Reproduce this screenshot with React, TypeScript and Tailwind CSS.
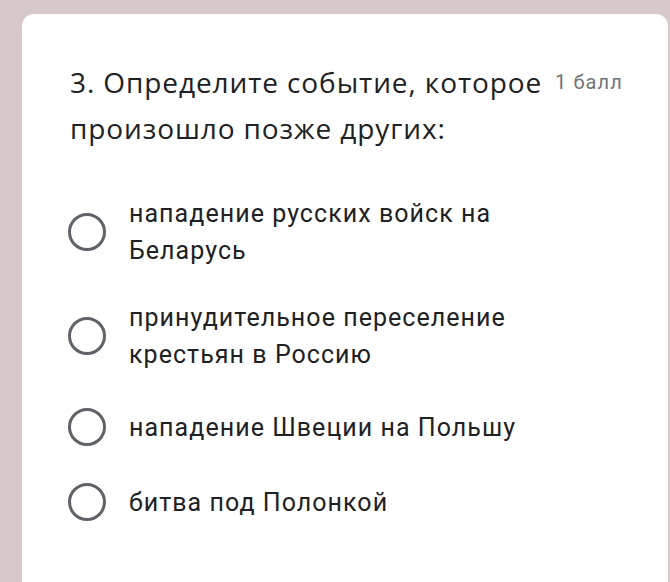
import React from "react";

const options = [
  { t: "нападение русских войск на Беларусь", mt: "mt-0" },
  { t: "принудительное переселение крестьян в Россию", mt: "mt-[30px]" },
  { t: "нападение Швеции на Польшу", mt: "mt-[35px]" },
  { t: "битва под Полонкой", mt: "mt-[37px]" },
];

export default function App() {
  return (
    <div className="w-[670px] h-[582px] bg-[#d7c9ca] overflow-hidden pl-[22px] pt-[14px]">
      <div className="w-[646px] h-[600px] bg-white rounded-[12px] pl-[46px] pr-[20px] pt-[45px]">
        <div className="flex items-start">
          <div className="w-[488px] ml-[2px] text-[28px] leading-[46px] text-[#202124] font-['Open_Sans',sans-serif] tracking-[0.9px]">
            3. Определите событие, которое произошло позже других:
          </div>
          <div className="pt-[7px] text-[20px] leading-[32px] text-[#70757a] font-['Roboto',sans-serif] tracking-[1.1px] ml-[-3px]">
            1 балл
          </div>
        </div>
        <div className="mt-[44px] flex flex-col">
          {options.map((o) => (
            <div key={o.t} className={`flex items-center ${o.mt}`}>
              <div className="w-[38px] h-[38px] rounded-full border-[3px] border-[#5f6368] shrink-0" />
              <div className="ml-[23px] w-[400px] text-[25px] leading-[37px] text-[#202124] font-['Roboto',sans-serif] tracking-[1.05px]">
                {o.t}
              </div>
            </div>
          ))}
        </div>
      </div>
    </div>
  );
}
